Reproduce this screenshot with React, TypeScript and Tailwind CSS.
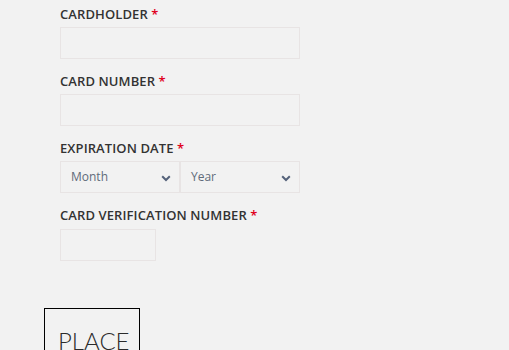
import React from 'react';

function Label({ children }: { children: React.ReactNode }) {
  return (
    <label className="block h-[18px] mb-[4px] text-[13px] leading-[18px] font-semibold uppercase text-[#333] tracking-[0.1px]">
      {children} <span className="text-[#e0001b]">*</span>
    </label>
  );
}

function Chevron() {
  return (
    <svg width="10" height="7" viewBox="0 0 10 7" className="absolute right-[8px] top-[13px] pointer-events-none">
      <path d="M1.2 1.3 L5 5 L8.8 1.3" fill="none" stroke="#55627a" strokeWidth="2" />
    </svg>
  );
}

function Select({ text }: { text: string }) {
  return (
    <div className="relative w-[120px] h-[32px] border border-[#e8e4e4] bg-[#f2f2f2]">
      <span className="block pl-[10px] leading-[30px] text-[12px] text-[#5f6b7a]">{text}</span>
      <Chevron />
    </div>
  );
}

export default function App() {
  return (
    <div className="w-[509px] h-[350px] bg-[#f2f2f2] overflow-hidden font-['Open_Sans',sans-serif]">
      <div className="pl-[60px] pt-[5px]">
        <div className="mb-[13px]">
          <Label>Cardholder</Label>
          <div className="w-[240px] h-[32px] border border-[#e8e4e4]" />
        </div>
        <div className="mb-[13px]">
          <Label>Card Number</Label>
          <div className="w-[240px] h-[32px] border border-[#e8e4e4]" />
        </div>
        <div className="mb-[13px]">
          <Label>Expiration Date</Label>
          <div className="flex">
            <Select text="Month" />
            <Select text="Year" />
          </div>
        </div>
        <div className="pb-[1px]">
          <Label>Card Verification Number</Label>
          <div className="relative top-[1px] w-[96px] h-[32px] border border-[#e8e4e4]" />
        </div>
      </div>
      <div className="pl-[44px] mt-[47px]">
        <button className="w-[96px] border border-black pt-[17px] pb-[10px] pl-[13px] text-left text-[24px] leading-[30px] font-light uppercase text-[#2b2b2b] font-['Lato',sans-serif]">
          Place Order
        </button>
      </div>
    </div>
  );
}
